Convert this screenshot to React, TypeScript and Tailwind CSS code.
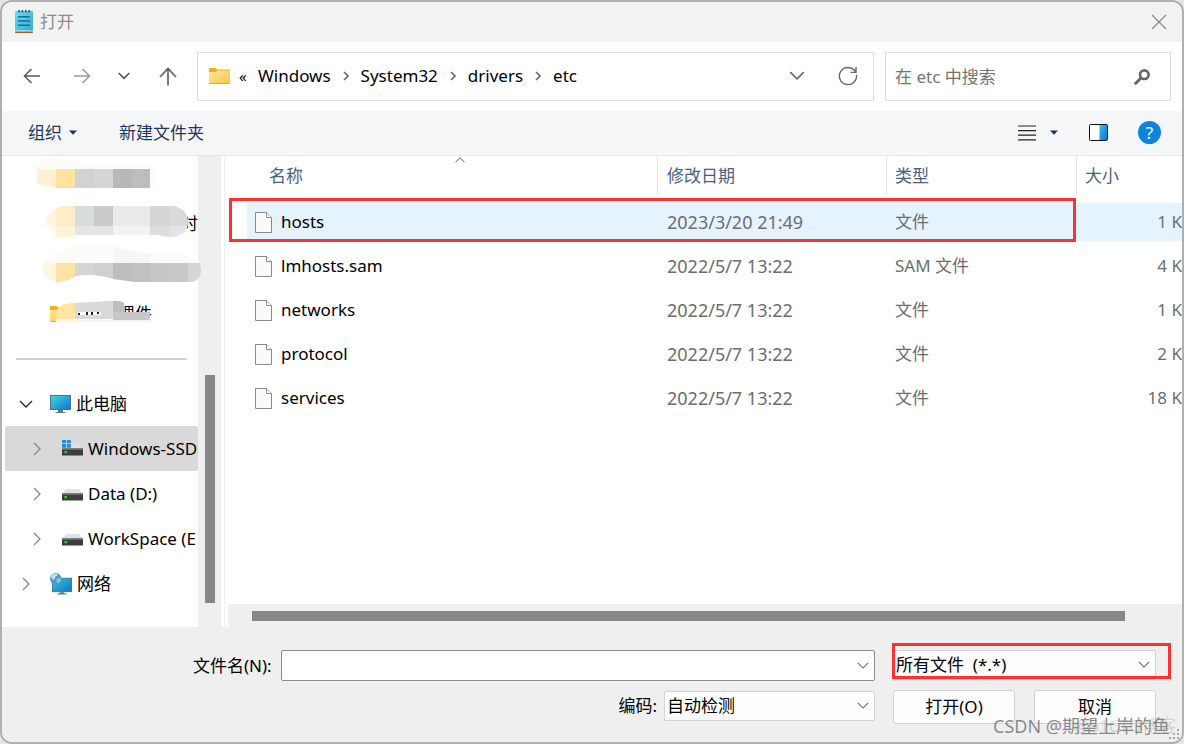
import type { ReactNode } from "react";

const files = [
  { name: "hosts", date: "2023/3/20 21:49", type: "文件", size: "1 K" },
  { name: "lmhosts.sam", date: "2022/5/7 13:22", type: "SAM 文件", size: "4 K" },
  { name: "networks", date: "2022/5/7 13:22", type: "文件", size: "1 K" },
  { name: "protocol", date: "2022/5/7 13:22", type: "文件", size: "2 K" },
  { name: "services", date: "2022/5/7 13:22", type: "文件", size: "18 K" },
];

const path = ["Windows", "System32", "drivers", "etc"];

function Chevron({ className, d = "M1 1l6 6 6-6", box = "0 0 14 8" }: { className: string; d?: string; box?: string }) {
  return (
    <svg viewBox={box} className={className} fill="none" stroke="currentColor" strokeWidth="1.3" aria-hidden="true">
      <path d={d} />
    </svg>
  );
}

function Caret() {
  return (
    <svg viewBox="0 0 8 5" className="h-[5px] w-2 fill-[#1a2f5c]" aria-hidden="true">
      <path d="M0 0.5h8L4 4.8z" />
    </svg>
  );
}

function NotepadIcon() {
  return (
    <svg viewBox="0 0 18 24" className="h-6 w-[18px]" aria-hidden="true">
      <defs>
        <linearGradient id="pad" x1="0" y1="0" x2="1" y2="1">
          <stop offset="0" stopColor="#6cdcf2" />
          <stop offset="1" stopColor="#38a9d2" />
        </linearGradient>
      </defs>
      <path d="M0 20h18v2.2a.8.8 0 0 1-.8.8H.8a.8.8 0 0 1-.8-.8z" fill="#a85a28" />
      <path d="M0 20h18v1.400H0z" fill="#e8eef0" />
      <rect y="1" width="18" height="19.500" rx="1" fill="url(#pad)" />
      <path d="M3 6.800h12M3 11h12M3 15.200h12" stroke="#12719b" strokeWidth="1.5" />
      <path d="M4 0v2.500M7.4 0v2.500M10.8 0v2.500M14.2 0v2.500" stroke="#17627f" strokeWidth="1.6" />
    </svg>
  );
}

function FolderIcon() {
  return (
    <svg viewBox="0 0 21 16" className="h-4 w-[21px] shrink-0" aria-hidden="true">
      <defs>
        <linearGradient id="folder" x1="0" y1="0" x2="1" y2="1">
          <stop offset="0" stopColor="#ffe69a" />
          <stop offset="1" stopColor="#fcc844" />
        </linearGradient>
      </defs>
      <path d="M0 1a1 1 0 0 1 1-1h5.6l1.6 1.600H20a1 1 0 0 1 1 1V8H0z" fill="#f2ae1c" />
      <path d="M0 4h6.6l1.6-1.400H21V15a1 1 0 0 1-1 1H1a1 1 0 0 1-1-1z" fill="url(#folder)" />
      <path d="M0 15h21a1 1 0 0 1-1 1H1a1 1 0 0 1-1-1z" fill="#e9a92c" />
    </svg>
  );
}

function FileIcon() {
  return (
    <svg viewBox="0 0 17 21" className="h-[21px] w-[17px] shrink-0" fill="#fafafa" stroke="#8a8a8a" aria-hidden="true">
      <path d="M.5.5h11l5 5v15H.5z" />
      <path d="M11.5.5v5h5" fill="#fff" />
    </svg>
  );
}

function ComputerIcon() {
  return (
    <svg viewBox="0 0 21 18" className="h-[18px] w-[21px] shrink-0" aria-hidden="true">
      <defs>
        <linearGradient id="screen" x1="0" y1="0" x2="1" y2="1">
          <stop offset="0" stopColor="#3adbe0" />
          <stop offset="1" stopColor="#1273c9" />
        </linearGradient>
      </defs>
      <rect x=".5" y=".5" width="20" height="14" fill="url(#screen)" stroke="#4c7486" />
      <path d="M8 15h5v2h2.500v1h-10v-1H8z" fill="#67757f" />
    </svg>
  );
}

function NetworkIcon() {
  return (
    <svg viewBox="0 0 23 23" className="h-[22px] w-[22px] shrink-0" aria-hidden="true">
      <defs>
        <linearGradient id="net" x1="0" y1="0" x2="1" y2="1">
          <stop offset="0" stopColor="#32cbdc" />
          <stop offset="1" stopColor="#1273c9" />
        </linearGradient>
      </defs>
      <rect x="2.500" y="5.500" width="20" height="14" fill="url(#net)" stroke="#45738a" />
      <path d="M10 20h5v1.500h2.500v1h-10v-1H10z" fill="#67757f" />
      <circle cx="6" cy="6" r="6" fill="#4a9cc7" />
      <path d="M1 3.500C3 1 5 .3 7 .6L8 3 5.500 4 5 6.500 2.500 7z" fill="#b9dff0" />
      <path d="M7 6l4-1 .6 2L9 11 7 9.500z" fill="#8cc8e4" />
    </svg>
  );
}

function DriveIcon({ system = false }: { system?: boolean }) {
  return (
    <svg viewBox="0 0 21 18" className="h-[18px] w-[21px] shrink-0" aria-hidden="true">
      <path d="M4 4h13l4 5H0z" fill="#dfe1e5" />
      <rect y="8.500" width="21" height="7" fill="#3d3d3d" />
      <path d="M0 8.500h21v1.400H0z" fill="#6f6f6f" />
      <rect x="2.600" y="11" width="2.200" height="2.200" fill="#3fe03c" />
      {system && (
        <>
          <path d="M0 0h9.500v8H0z" fill="#d9d9d9" />
          <path d="M0-1h4v4H0zM4.800-1h4v4h-4zM0 3.800h4v4H0zM4.800 3.800h4v4h-4z" fill="#1b8fe0" />
        </>
      )}
    </svg>
  );
}

type Block = [number, number, number, number, string];

const blocks1: Block[] = [
  [37, 169, 19, 20, "#fff0d6"], [56, 169, 19, 20, "#ffe29b"], [75, 169, 19, 20, "#d2d2d3"],
  [94, 169, 19, 20, "#d7d6d4"], [113, 169, 19, 20, "#b6b9b8"], [132, 169, 18, 20, "#bdbdbf"],
];
const blocks2: Block[] = [
  [46, 206, 10, 20, "#fff5df"], [56, 206, 19, 20, "#ffedc5"], [75, 206, 19, 20, "#d9dcdc"],
  [94, 206, 19, 20, "#cacaca"], [113, 206, 37, 20, "#e9eaec"], [150, 206, 19, 20, "#d5d5d3"],
  [169, 206, 19, 20, "#dadada"],
  [46, 226, 10, 13, "#fffaf0"], [56, 226, 19, 13, "#fff2d6"], [75, 226, 19, 13, "#e4e6e6"],
  [94, 226, 19, 13, "#e2e2e1"], [113, 226, 37, 13, "#f2f2f2"], [150, 226, 19, 13, "#dedddA"],
  [169, 226, 19, 13, "#e4e4e4"],
];
const blocks3: Block[] = [
  [43, 245, 32, 18, "#fefbf5"], [75, 245, 38, 18, "#fbfbfb"], [113, 245, 37, 18, "#f6f6f6"],
  [150, 245, 51, 18, "#fafbfb"],
  [43, 263, 13, 20, "#fff5df"], [56, 263, 19, 20, "#ffe3a5"], [75, 263, 19, 20, "#d6d5d4"],
  [94, 263, 19, 20, "#cfd0d2"], [113, 263, 19, 20, "#bebebe"], [132, 263, 18, 20, "#c0c1c3"],
  [150, 263, 19, 20, "#cac6c3"], [169, 263, 19, 20, "#c7cacd"], [188, 263, 13, 20, "#d6d6d6"],
];
const blocks4: Block[] = [
  [56, 301, 19, 18, "#ffe5a2"], [75, 301, 38, 18, "#dbdada"], [113, 301, 12, 18, "#bcbdbf"],
  [113, 312, 37, 8, "#c6c7c8"], [56, 319, 19, 3, "#fff5dd"], [75, 320, 76, 3, "#f2f2f2"],
];

function Blocks({ items, clip }: { items: Block[]; clip: string }) {
  return (
    <g clipPath={`url(#${clip})`} shapeRendering="crispEdges">
      {items.map(([x, y, w, h, fill]) => (
        <rect key={`${x}-${y}`} x={x} y={y} width={w} height={h} fill={fill} />
      ))}
    </g>
  );
}

// Pixelated smears that hide the pinned folder names
function Smears() {
  return (
    <svg viewBox="2 156 200 180" className="pointer-events-none absolute top-0 left-0 z-10 h-[180px] w-[200px]" aria-hidden="true">
      <defs>
        <clipPath id="s1"><path d="M37 169h113v19H56q-14-1-19-5z" /></clipPath>
        <clipPath id="s2"><path d="M62 206h113q13 4 13 16t-14 15q-10 0-16-2H75q-8 4-17 2-12-5-12-15t16-16z" /></clipPath>
        <clipPath id="s3"><path d="M43 268q0-12 32-22 20-2 38 0 18 7 50 8 38-2 38 16 0 10-9 12h-57l-22-3q-19-6-37-3-9 6-20 6-12-2-13-14z" /></clipPath>
        <clipPath id="s4"><path d="M56 318q0-14 14-15l25-1q25-3 29 1l1 9h26v10H56z" /></clipPath>
      </defs>
      <path d="M33 168q5-10 18-10 50 8 95 7 11 4 11 13t-7 9v-18H38z" fill="#fbfbfb" />
      <Blocks items={blocks1} clip="s1" />
      <Blocks items={blocks2} clip="s2" />
      <Blocks items={blocks3} clip="s3" />
      <Blocks items={blocks4} clip="s4" />
      <path d="M77 312h24v3H77z" fill="#fff" />
      <path d="M78 313h2v2h-2zM86 312h2v3h-2zM91 312h2v3h-2zM97 312h2v2h-2z" fill="#222" />
    </svg>
  );
}

function TreeItem({ icon, label, nested, open, selected }: { icon: ReactNode; label: string; nested?: boolean; open?: boolean; selected?: boolean }) {
  return (
    <li className={selected ? "ml-[3px] rounded-[2px] bg-[#d9d9d9]" : "ml-[3px]"}>
      <a href="#" className="flex h-[45px] items-center whitespace-nowrap text-black">
        <span className={nested ? "flex w-[57px] shrink-0 pl-[28px]" : "flex w-[45px] shrink-0 justify-center pr-1"}>
          {open ? (
            <Chevron className="h-2 w-[14px] text-[#222]" />
          ) : (
            <Chevron className="h-[14px] w-2 text-[#888]" box="0 0 8 14" d="M1 1l6 6-6 6" />
          )}
        </span>
        {icon}
        <span className="ml-[5px]">{label}</span>
      </a>
    </li>
  );
}

function Sidebar() {
  return (
    <aside className="relative flex w-[219px] shrink-0">
      <nav className="w-[196px] shrink-0 overflow-hidden" aria-label="文件夹">
        <div className="h-[90px] pt-[45px]">
          <div className="flex h-[45px] items-center justify-end">时</div>
        </div>
        <div className="mt-[45px] flex h-[45px] items-center pl-12">
          <FolderIcon />
          <span className="ml-[47px]">课件</span>
        </div>
        <div className="flex h-[45px] items-center pr-[11px] pl-[14px]">
          <hr className="w-full border-t-2 border-[#d0d0d0]" />
        </div>
        <ul>
          <TreeItem icon={<ComputerIcon />} label="此电脑" open />
          <TreeItem icon={<DriveIcon system />} label="Windows-SSD" nested selected />
          <TreeItem icon={<DriveIcon />} label="Data (D:)" nested />
          <TreeItem icon={<DriveIcon />} label="WorkSpace (E" nested />
          <TreeItem icon={<NetworkIcon />} label="网络" />
        </ul>
      </nav>
      <div className="flex w-[23px] flex-col items-center bg-[#efefef] pt-[219px] pb-6">
        <div className="w-[10px] flex-1 bg-[#868686]" />
      </div>
      <Smears />
    </aside>
  );
}

function FileList() {
  return (
    <section className="relative ml-[3px] flex min-w-0 flex-1 flex-col border-l border-[#f0f0f0]">
      <Chevron className="absolute top-[1px] left-[229px] h-[6px] w-3 text-[#555]" d="M1 7l6-6 6 6" />
      <table className="w-full table-fixed border-separate border-spacing-0 text-left">
        <thead className="text-[#4c607a]">
          <tr className="h-[39px]">
            <th className="pl-[44px] font-normal">名称</th>
            <th className="w-[229px] border-l border-[#e5e5e5] pl-[9px] font-normal">修改日期</th>
            <th className="w-[190px] border-l border-[#e5e5e5] pl-2 font-normal">类型</th>
            <th className="w-[106px] border-l border-[#e5e5e5] pl-2 font-normal">大小</th>
          </tr>
        </thead>
        <tbody className="text-[#6d6d6d] before:block before:h-[5px] before:content-['']">
          {files.map((file, i) => {
            const band = i === 0 ? "flex h-[38px] items-center bg-[#e5f3ff]" : "flex h-[38px] items-center";
            return (
              <tr key={file.name} className="h-11">
                <td className="p-0 pl-[22px]">
                  <div className={band}>
                    <span className="flex items-center gap-[9px] pl-2 text-black">
                      <FileIcon />
                      {file.name}
                    </span>
                  </div>
                </td>
                <td className="p-0">
                  <div className={band}>
                    <span className="pl-[10px] text-[18px]">{file.date}</span>
                  </div>
                </td>
                <td className="p-0">
                  <div className={band}>
                    <span className="pl-[9px]">{file.type}</span>
                  </div>
                </td>
                <td className="p-0">
                  <div className={band}>
                    <span className="ml-auto">{file.size}</span>
                  </div>
                </td>
              </tr>
            );
          })}
        </tbody>
      </table>
      <div className="pointer-events-none absolute top-[42px] right-[106px] left-1 h-[44px] border-[3px] border-[#fb3232]" />
      <div className="mt-auto ml-[3px] flex h-[23px] items-center bg-[#efefef] pr-[57px] pl-6">
        <div className="h-[10px] flex-1 bg-[#868686]" />
      </div>
    </section>
  );
}

function SelectBox({ id, label, value, className }: { id: string; label: string; value: string; className: string }) {
  return (
    <div className={`relative h-[30px] ${className}`}>
      <select
        id={id}
        aria-label={label}
        className="h-full w-full appearance-none rounded-[2px] border border-[#d2d2d2] bg-[#fdfdfd] pl-[2px] text-black outline-none"
      >
        <option>{value}</option>
      </select>
      <Chevron className="pointer-events-none absolute top-[11px] right-[6px] h-[7px] w-3 text-[#666]" />
    </div>
  );
}

function Footer() {
  return (
    <footer className="relative h-[115px] shrink-0 bg-[#efefef] pt-[23px] pr-[26px] pl-[191px]">
      <div className="flex items-start gap-[18px]">
        <div className="flex flex-1 items-center gap-2">
          <label htmlFor="filename" className="w-20 shrink-0 whitespace-nowrap">
            文件名(N):
          </label>
          <div className="relative h-[31px] flex-1">
            <input id="filename" type="text" className="h-full w-full rounded-[2px] border border-[#8c8c8c] bg-white px-1 outline-none" />
            <Chevron className="pointer-events-none absolute top-3 right-[6px] h-[7px] w-3 text-[#666]" />
          </div>
        </div>
        <SelectBox id="filetype" label="文件类型" value={"所有文件\u00a0 (*.*)"} className="w-[263px]" />
      </div>
      <div className="mt-[9px] flex items-start justify-end gap-[18px]">
        <div className="flex h-8 items-center gap-[7px]">
          <label htmlFor="encoding">编码:</label>
          <SelectBox id="encoding" label="编码" value="自动检测" className="w-[211px]" />
        </div>
        <div className="flex w-[263px] justify-between">
          <button type="button" className="h-[34px] w-[122px] rounded-[3px] border border-[#d2d2d2] bg-[#fdfdfd]">
            打开(O)
          </button>
          <button type="button" className="h-[34px] w-[122px] rounded-[3px] border border-[#d2d2d2] bg-[#fdfdfd]">
            取消
          </button>
        </div>
      </div>
      <div className="pointer-events-none absolute top-4 right-[11px] h-[36px] w-[279px] border-[3px] border-[#fb3232]" />
      <span className="pointer-events-none absolute right-[6px] bottom-1 leading-6 whitespace-nowrap text-black/15">@51CTO博客</span>
      <span className="pointer-events-none absolute right-3 bottom-1 text-[18px] leading-6 whitespace-nowrap text-[#777]/85">CSDN @期望上岸的鱼</span>
      <svg viewBox="0 0 11 11" className="absolute right-[2px] bottom-[2px] h-[11px] w-[11px] fill-[#a5a5a5]" aria-hidden="true">
        <path d="M8 0h2v2H8zM4 4h2v2H4zM8 4h2v2H8zM0 8h2v2H0zM4 8h2v2H4zM8 8h2v2H8z" />
      </svg>
    </footer>
  );
}

export default function App() {
  return (
    <div className="min-h-screen bg-[#e4e4e4]">
      <div className="flex min-h-screen flex-col overflow-hidden rounded-[12px] border-2 border-[#b0b0b0] bg-white font-['Noto_Sans','Noto_Sans_CJK_SC',sans-serif] text-[17px] leading-6 text-black">
        <header className="flex h-10 items-center bg-[#f2f2f2] pr-[15px] pl-[13px]">
          <NotepadIcon />
          <h1 className="ml-[7px] text-[#8d8d8d]">打开</h1>
          <button type="button" aria-label="关闭" className="ml-auto text-[#8a8a8a]">
            <svg viewBox="0 0 16 16" className="h-4 w-4" fill="none" stroke="currentColor" strokeWidth="1.2">
              <path d="M1 1l14 14M15 1L1 15" />
            </svg>
          </button>
        </header>

        <div className="flex h-[69px] items-center pr-[11px] pl-[5px]">
          <button type="button" aria-label="后退" className="flex w-[50px] justify-center pb-[2px] text-[#5c5c5c]">
            <svg viewBox="0 0 18 16" className="h-4 w-[18px]" fill="none" stroke="currentColor" strokeWidth="1.6">
              <path d="M17 8H1.500M8.500 1l-7 7 7 7" />
            </svg>
          </button>
          <button type="button" aria-label="前进" className="flex w-[50px] justify-center pb-[2px] text-[#9a9a9a]">
            <svg viewBox="0 0 18 16" className="h-4 w-[18px]" fill="none" stroke="currentColor" strokeWidth="1.500">
              <path d="M1 8h15.500M9.500 1l7 7-7 7" />
            </svg>
          </button>
          <button type="button" aria-label="最近位置" className="flex w-[34px] justify-center pb-[2px] text-[#555]">
            <svg viewBox="0 0 12 8" className="h-2 w-3" fill="none" stroke="currentColor" strokeWidth="1.700">
              <path d="M.7 1L6 6.300 11.300 1" />
            </svg>
          </button>
          <button type="button" aria-label="上移" className="flex w-[54px] justify-center text-[#5c5c5c]">
            <svg viewBox="0 0 18 19" className="h-[19px] w-[18px]" fill="none" stroke="currentColor" strokeWidth="1.600">
              <path d="M9 18.500V1.500M1 10l8-8.500 8 8.500" />
            </svg>
          </button>

          <div className="ml-[2px] flex h-[49px] min-w-0 flex-1 items-center border border-[#dedede] pb-[2px] pl-[11px]">
            <FolderIcon />
            <span className="w-[28px] pl-[9px] text-[15px]">«</span>
            {path.map((part, i) => (
              <div key={part} className="flex items-center">
                {i > 0 && (
                  <span className="flex w-[30px] justify-center">
                    <svg viewBox="0 0 6 10" className="h-[10px] w-[6px]" fill="none" stroke="#666" strokeWidth="1.600" aria-hidden="true">
                      <path d="M1 1l4 4-4 4" />
                    </svg>
                  </span>
                )}
                <a href="#">{part}</a>
              </div>
            ))}
            <button type="button" aria-label="展开路径" className="ml-auto flex w-[52px] justify-center text-[#666]">
              <Chevron className="h-[9px] w-4" />
            </button>
            <button type="button" aria-label="刷新" className="flex w-[50px] justify-center text-[#666]">
              <svg viewBox="0 0 20 20" className="h-5 w-5" fill="none" stroke="currentColor" strokeWidth="1.400">
                <path d="M18.500 8.800A8.600 8.600 0 1 1 16.300 4.200L18 6.200M18 1v5.400h-5.400" />
              </svg>
            </button>
          </div>

          <div className="ml-[11px] flex h-[49px] w-[286px] items-center border border-[#dedede] pr-[20px] pl-[9px]">
            <input
              type="text"
              aria-label="搜索"
              placeholder="在 etc 中搜索"
              className="min-w-0 flex-1 bg-transparent outline-none placeholder:text-[#757575]"
            />
            <svg viewBox="0 0 16 16" className="h-4 w-4" fill="none" stroke="#666" aria-hidden="true">
              <circle cx="10.300" cy="5.700" r="4.300" strokeWidth="2.600" />
              <path d="M7.200 8.800l-6.400 6.400" strokeWidth="3" />
            </svg>
          </div>
        </div>

        <div className="flex h-[45px] items-center border-b border-[#e6e8ea] bg-[#f5f6f8] pr-[21px] pb-px pl-[26px] text-[#1e3560]">
          <button type="button" className="flex items-center gap-[7px]">
            组织
            <Caret />
          </button>
          <button type="button" className="ml-[42px]">
            新建文件夹
          </button>
          <button type="button" aria-label="更改视图" className="ml-auto flex items-center gap-[14px]">
            <svg viewBox="0 0 18 16" className="h-4 w-[18px]" stroke="#222" strokeWidth="1.200" aria-hidden="true">
              <path d="M0 1h18M0 5.600h18M0 10.200h18M0 14.800h18" />
            </svg>
            <Caret />
          </button>
          <button type="button" aria-label="预览窗格" className="ml-[31px]">
            <svg viewBox="0 0 19 17" className="h-[17px] w-[19px]">
              <defs>
                <linearGradient id="pane" x1="0" y1="0" x2="1" y2="1">
                  <stop offset="0" stopColor="#38c0fa" />
                  <stop offset="1" stopColor="#0a72cf" />
                </linearGradient>
              </defs>
              <rect x=".5" y=".5" width="18" height="16" rx="1" fill="#fff" />
              <path d="M10.500 1H18v15h-7.500z" fill="url(#pane)" />
              <rect x=".5" y=".5" width="18" height="16" rx="1" fill="none" stroke="#111" />
            </svg>
          </button>
          <button
            type="button"
            aria-label="帮助"
            className="ml-[30px] flex h-[23px] w-[23px] items-center justify-center rounded-full bg-[#0d84dc] text-[17px] leading-none text-white"
          >
            ?
          </button>
        </div>

        <main className="flex min-h-[471px] flex-1">
          <Sidebar />
          <FileList />
        </main>

        <Footer />
      </div>
    </div>
  );
}
